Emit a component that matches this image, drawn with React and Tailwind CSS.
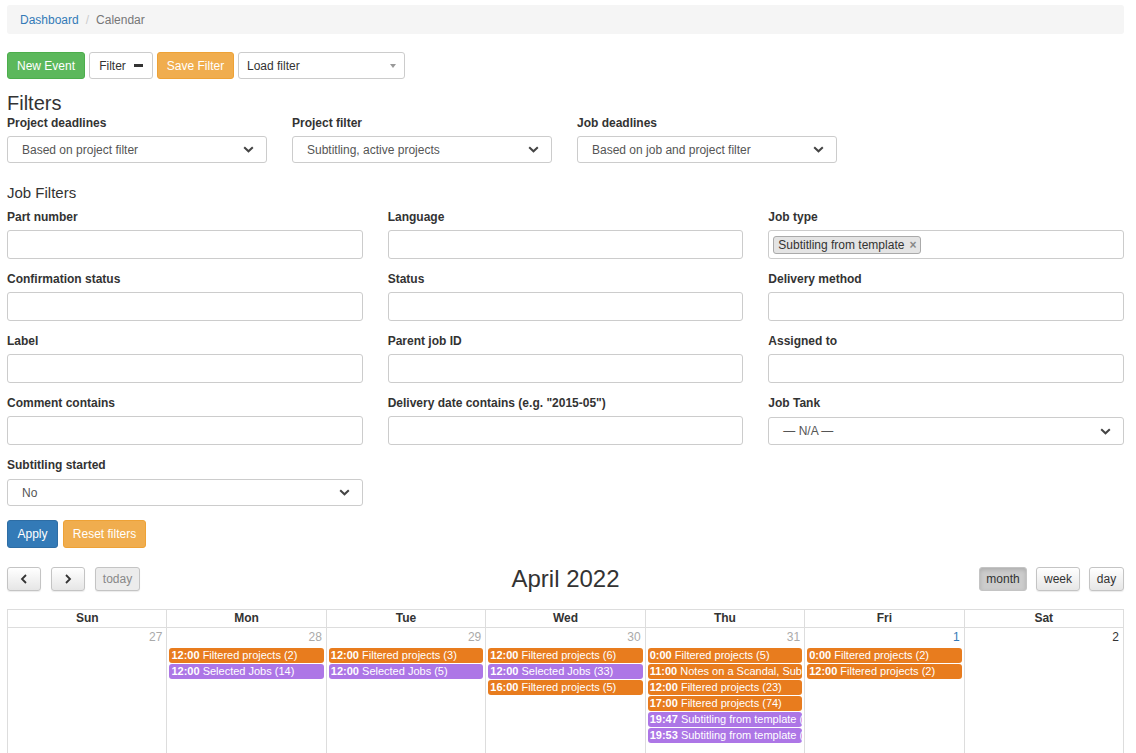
import React from 'react';

const font = { fontFamily: '"Liberation Sans", Arial, sans-serif' };

function Chevron() {
  return (
    <svg width="11" height="7" viewBox="0 0 11 7" className="shrink-0">
      <path d="M1.2 1.2 L5.5 5.3 L9.8 1.2" fill="none" stroke="#444" strokeWidth="2" />
    </svg>
  );
}

function SelectBox({ value, className = '' }) {
  return (
    <div
      className={`flex h-[27px] items-center justify-between rounded-[3px] border border-[#ccc] bg-white pl-[14px] pr-[12px] text-[12px] text-[#555] ${className}`}
    >
      <span>{value}</span>
      <Chevron />
    </div>
  );
}

function Field({ label, children, gap = 'mb-[6px]' }) {
  return (
    <div>
      <div className={`${gap} text-[12px] font-bold leading-[14px] text-[#333]`}>{label}</div>
      {children || <div className="h-[29px] rounded-[3px] border border-[#ccc] bg-white" />}
    </div>
  );
}

function FcButton({ children, active, disabled, className = '' }) {
  return (
    <div
      className={`flex h-[24px] items-center justify-center rounded-[3px] border border-[#c4c4c4] text-[12px] shadow-[0_1px_1px_rgba(0,0,0,0.08)] ${
        active
          ? 'bg-[#cccccc] text-[#333] shadow-[inset_0_2px_4px_rgba(0,0,0,0.15)]'
          : disabled
          ? 'bg-[#ececec] text-[#888]'
          : 'bg-gradient-to-b from-white to-[#e6e6e6] text-[#333]'
      } ${className}`}
    >
      {children}
    </div>
  );
}

const ORANGE = 'bg-[#e87c1e]';
const PURPLE = 'bg-[#ad76e6]';

const days = [
  { n: '27', other: true, events: [] },
  {
    n: '28',
    other: true,
    events: [
      ['12:00', 'Filtered projects (2)', ORANGE],
      ['12:00', 'Selected Jobs (14)', PURPLE],
    ],
  },
  {
    n: '29',
    other: true,
    events: [
      ['12:00', 'Filtered projects (3)', ORANGE],
      ['12:00', 'Selected Jobs (5)', PURPLE],
    ],
  },
  {
    n: '30',
    other: true,
    events: [
      ['12:00', 'Filtered projects (6)', ORANGE],
      ['12:00', 'Selected Jobs (33)', PURPLE],
      ['16:00', 'Filtered projects (5)', ORANGE],
    ],
  },
  {
    n: '31',
    other: true,
    events: [
      ['0:00', 'Filtered projects (5)', ORANGE],
      ['11:00', 'Notes on a Scandal, Subtitles', ORANGE],
      ['12:00', 'Filtered projects (23)', ORANGE],
      ['17:00', 'Filtered projects (74)', ORANGE],
      ['19:47', 'Subtitling from template (S1.E2)', PURPLE],
      ['19:53', 'Subtitling from template (S4.E1)', PURPLE],
    ],
  },
  {
    n: '1',
    first: true,
    events: [
      ['0:00', 'Filtered projects (2)', ORANGE],
      ['12:00', 'Filtered projects (2)', ORANGE],
    ],
  },
  { n: '2', events: [] },
];

export default function App() {
  return (
    <div style={font} className="min-h-screen bg-white pl-[7px] pr-[12px] pt-[5px] text-[12px] text-[#333]">
      {/* Breadcrumb */}
      <div className="flex h-[29px] items-center rounded-[3px] bg-[#f5f5f5] px-[13px] text-[12px]">
        <span className="text-[#337ab7]">Dashboard</span>
        <span className="px-[7px] text-[#ccc]">/</span>
        <span className="text-[#777]">Calendar</span>
      </div>

      {/* Toolbar */}
      <div className="mt-[18px] flex items-center gap-[4px]">
        <div className="flex h-[27px] w-[78px] items-center justify-center rounded-[3px] border border-[#4cae4c] bg-[#5cb85c] text-white">
          New Event
        </div>
        <div className="flex h-[27px] w-[64px] items-center justify-center gap-[8px] rounded-[3px] border border-[#ccc] bg-white">
          Filter
          <span className="inline-block h-[3px] w-[9px] bg-[#333]" />
        </div>
        <div className="flex h-[27px] w-[77px] items-center justify-center rounded-[3px] border border-[#eea236] bg-[#f0ad4e] text-white">
          Save Filter
        </div>
        <div className="flex h-[27px] w-[167px] items-center justify-between rounded-[3px] border border-[#ccc] bg-white pl-[8px] pr-[8px]">
          <span>Load filter</span>
          <span className="inline-block h-0 w-0 border-x-[3px] border-t-[4px] border-x-transparent border-t-[#999]" />
        </div>
      </div>

      {/* Filters */}
      <div className="mt-[13px] text-[20px] leading-[23px]">Filters</div>
      <div className="mt-[1px] flex gap-[25px]">
        {[
          ['Project deadlines', 'Based on project filter'],
          ['Project filter', 'Subtitling, active projects'],
          ['Job deadlines', 'Based on job and project filter'],
        ].map(([l, v]) => (
          <div key={l} className="w-[260px]">
            <div className="mb-[6px] text-[12px] font-bold leading-[14px]">{l}</div>
            <SelectBox value={v} />
          </div>
        ))}
      </div>

      <div className="mt-[21px] text-[15px] leading-[18px]">Job Filters</div>

      <div className="mt-[8px] grid grid-cols-3 gap-x-[25px] gap-y-[13px]">
        <Field label="Part number" />
        <Field label="Language" />
        <Field label="Job type">
          <div className="flex h-[29px] items-center rounded-[3px] border border-[#ccc] bg-white px-[4px]">
            <span className="flex h-[18px] items-center gap-[5px] rounded-[3px] border border-[#aaa] bg-[#e4e4e4] px-[4px] text-[12px]">
              Subtitling from template
              <span className="text-[12px] font-bold leading-none text-[#888]">×</span>
            </span>
          </div>
        </Field>
        <Field label="Confirmation status" />
        <Field label="Status" />
        <Field label="Delivery method" />
        <Field label="Label" />
        <Field label="Parent job ID" />
        <Field label="Assigned to" />
        <Field label="Comment contains" />
        <Field label='Delivery date contains (e.g. "2015-05")' />
        <Field label="Job Tank" gap="mb-[7px]">
          <SelectBox value="— N/A —" className="h-[28px]" />
        </Field>
        <Field label="Subtitling started" gap="mb-[7px]">
          <SelectBox value="No" />
        </Field>
      </div>

      <div className="mt-[14px] flex gap-[5px]">
        <div className="flex h-[28px] w-[51px] items-center justify-center rounded-[3px] border border-[#2e6da4] bg-[#337ab7] text-white">
          Apply
        </div>
        <div className="flex h-[28px] w-[83px] items-center justify-center rounded-[3px] border border-[#eea236] bg-[#f0ad4e] text-white">
          Reset filters
        </div>
      </div>

      {/* Calendar toolbar */}
      <div className="mt-[18px] flex h-[25px] items-center justify-between">
        <div className="flex w-[300px] items-center gap-[10px]">
          <FcButton className="w-[34px]">
            <svg width="8" height="10" viewBox="0 0 8 10">
              <path d="M6 1 L2 5 L6 9" fill="none" stroke="#333" strokeWidth="1.8" />
            </svg>
          </FcButton>
          <FcButton className="w-[34px]">
            <svg width="8" height="10" viewBox="0 0 8 10">
              <path d="M2 1 L6 5 L2 9" fill="none" stroke="#333" strokeWidth="1.8" />
            </svg>
          </FcButton>
          <FcButton disabled className="w-[45px]">
            today
          </FcButton>
        </div>
        <div className="text-[24px] leading-[28px] text-[#333]">April 2022</div>
        <div className="flex w-[300px] items-center justify-end gap-[9px]">
          <FcButton active className="w-[48px]">
            month
          </FcButton>
          <FcButton className="w-[44px]">week</FcButton>
          <FcButton className="w-[35px]">day</FcButton>
        </div>
      </div>

      {/* Calendar */}
      <div className="mt-[18px] border-l border-t border-[#ddd]">
        <div className="grid grid-cols-7">
          {['Sun', 'Mon', 'Tue', 'Wed', 'Thu', 'Fri', 'Sat'].map((d) => (
            <div
              key={d}
              className="h-[18px] border-b border-r border-[#ddd] text-center text-[12px] font-bold leading-[17px]"
            >
              {d}
            </div>
          ))}
        </div>
        <div className="grid grid-cols-7">
          {days.map((d) => (
            <div key={d.n} className="min-h-[140px] border-r border-[#ddd]">
              <div
                className={`pr-[4px] pt-[2px] text-right text-[12px] leading-[14px] ${
                  d.other ? 'text-[#aaa]' : d.first ? 'text-[#337ab7]' : 'text-[#333]'
                }`}
              >
                {d.n}
              </div>
              <div className="mt-[4px] px-[2px]">
                {d.events.map(([t, title, color], i) => (
                  <div
                    key={i}
                    className={`mb-[1px] h-[15px] overflow-hidden whitespace-nowrap rounded-[3px] px-[2px] text-[11px] leading-[15px] text-white ${color}`}
                  >
                    <span className="font-bold">{t}</span> {title}
                  </div>
                ))}
              </div>
            </div>
          ))}
        </div>
      </div>
    </div>
  );
}
